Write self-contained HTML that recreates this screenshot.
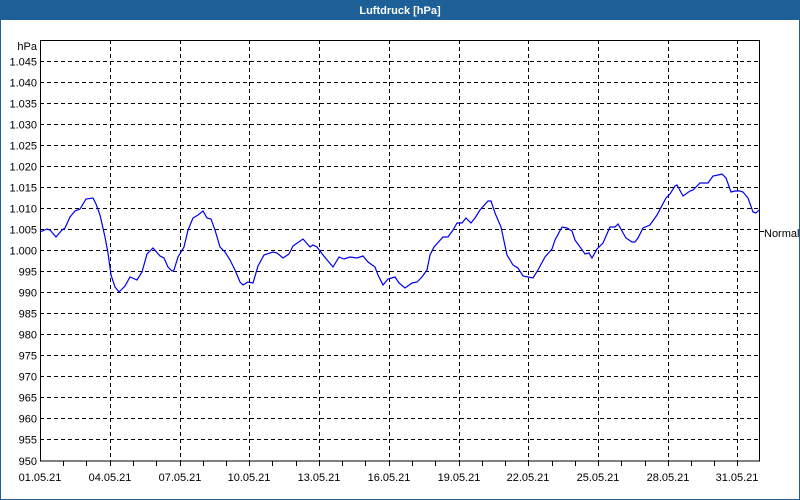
<!DOCTYPE html>
<html><head><style>
body{margin:0;width:800px;height:500px;overflow:hidden;background:#fff;font-family:"Liberation Sans","DejaVu Sans",sans-serif}
</style></head><body>
<svg width="800" height="500" xmlns="http://www.w3.org/2000/svg" style="display:block">
<rect x="0" y="0" width="800" height="500" fill="#fff"/>
<rect x="0.5" y="0.5" width="799" height="499" fill="none" stroke="#1d6098"/>
<rect x="0" y="0" width="800" height="20" fill="#1d6098"/>
<text x="400" y="14" fill="#fff" font-size="11" font-weight="bold" text-anchor="middle">Luftdruck [hPa]</text>
<g stroke="#000" stroke-dasharray="4,3" stroke-width="1" fill="none">
<path d="M40 61.5H760M40 82.5H760M40 103.5H760M40 124.5H760M40 145.5H760M40 166.5H760M40 187.5H760M40 208.5H760M40 229.5H760M40 250.5H760M40 271.5H760M40 292.5H760M40 313.5H760M40 334.5H760M40 355.5H760M40 376.5H760M40 397.5H760M40 418.5H760M40 439.5H760"/>
<path d="M110.5 40V461M180.5 40V461M249.5 40V461M319.5 40V461M389.5 40V461M459.5 40V461M528.5 40V461M598.5 40V461M668.5 40V461M737.5 40V461"/>
</g>
<rect x="40.5" y="40.5" width="719" height="420.5" fill="none" stroke="#000"/>
<g stroke="#000"><path d="M63.5 461V466M86.5 461V466M110.5 461V466M133.5 461V466M156.5 461V466M180.5 461V466M203.5 461V466M226.5 461V466M249.5 461V466M272.5 461V466M296.5 461V466M319.5 461V466M342.5 461V466M365.5 461V466M389.5 461V466M412.5 461V466M435.5 461V466M459.5 461V466M482.5 461V466M505.5 461V466M528.5 461V466M552.5 461V466M575.5 461V466M598.5 461V466M621.5 461V466M645.5 461V466M668.5 461V466M691.5 461V466M714.5 461V466M737.5 461V466M760 231.5H764"/></g>
<polyline fill="none" stroke="#0000ee" stroke-width="1.2" points="40,232 47,229 50,230 56,237 62,230 65,228 70,217 75,211 80,209 86,199 93,198 96,204 100,215 105,237 108,253 111,275 115,287 119,292 125,286 130,277 137,280 142,272 147,254 153,248 160,256 164,258 168,267 172,271 174,270 178,257 184,247 188,230 193,218 198,215 203,211 207,218 211,219 215,230 220,247 225,252 230,260 235,270 240,282 243,285 248,282 253,283 258,266 264,255 273,252 277,253 283,258 289,254 293,246 303,239 310,247 313,245 317,247 323,255 333,267 339,257 344,259 350,257 357,258 363,256 368,262 375,267 378,275 383,285 388,279 395,277 399,283 405,288 412,283 417,282 422,277 427,270 430,255 434,247 443,237 448,237 453,230 457,223 462,223 466,218 471,223 475,218 480,210 488,201 491,201 495,213 501,227 507,255 513,265 518,268 523,276 528,277 533,278 538,270 545,257 552,249 555,240 562,227 567,228 572,231 575,240 585,254 589,253 592,258 597,249 603,243 610,227 615,227 618,224 626,238 632,242 635,242 638,238 643,228 650,225 657,215 666,198 670,194 675,186 677,185 683,196 690,191 693,190 700,183 708,183 713,176 718,175 722,174 726,178 731,192 735,191 740,191 743,192 748,198 753,212 756,213 759,210"/>
<g font-size="11" fill="#000" text-anchor="end">
<text x="37" y="50">hPa</text>
<text x="37" y="65.5">1.045</text><text x="37" y="86.5">1.040</text><text x="37" y="107.5">1.035</text><text x="37" y="128.5">1.030</text><text x="37" y="149.5">1.025</text><text x="37" y="170.5">1.020</text><text x="37" y="191.5">1.015</text><text x="37" y="212.5">1.010</text><text x="37" y="233.5">1.005</text><text x="37" y="254.5">1.000</text><text x="37" y="275.5">995</text><text x="37" y="296.5">990</text><text x="37" y="317.5">985</text><text x="37" y="338.5">980</text><text x="37" y="359.5">975</text><text x="37" y="380.5">970</text><text x="37" y="401.5">965</text><text x="37" y="422.5">960</text><text x="37" y="443.5">955</text><text x="37" y="465">950</text>
</g>
<g font-size="11" fill="#000" text-anchor="middle">
<text x="40" y="481">01.05.21</text><text x="110" y="481">04.05.21</text><text x="180" y="481">07.05.21</text><text x="249" y="481">10.05.21</text><text x="319" y="481">13.05.21</text><text x="389" y="481">16.05.21</text><text x="459" y="481">19.05.21</text><text x="528" y="481">22.05.21</text><text x="598" y="481">25.05.21</text><text x="668" y="481">28.05.21</text><text x="737" y="481">31.05.21</text>
</g>
<text x="764" y="237" font-size="11" fill="#000">Normal</text>
</svg>
</body></html>
